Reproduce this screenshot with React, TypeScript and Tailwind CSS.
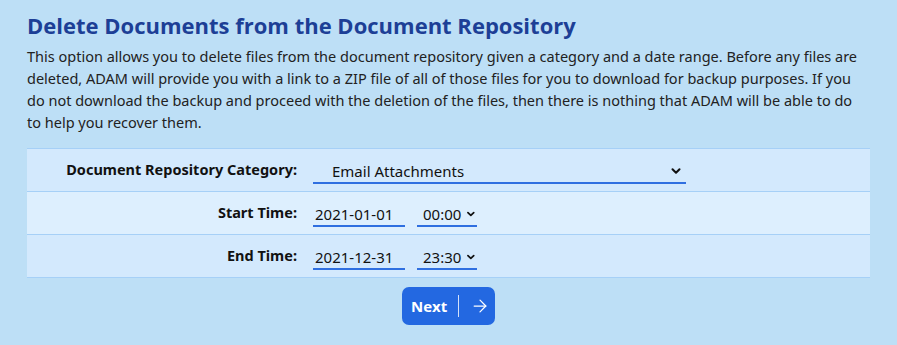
import { ArrowRight, ChevronDown } from 'lucide-react';

const ROW = 'flex items-center border-b border-[#a6d0f7] h-[43px]';
const LABEL = 'w-[270px] shrink-0 text-right font-bold text-[14.5px] text-[#111] mr-4';
const FIELD = 'border-b-2 border-[#2f6fe0] text-[15px] text-[#111] h-[24px] flex items-center';

function Chevron() {
  return <ChevronDown size={14} strokeWidth={3.5} className="text-[#111]" />;
}

export default function App() {
  return (
    <div className="min-h-[345px] w-full bg-[#bddff6] px-[27px] pt-[10px] font-['Noto_Sans','Open_Sans',sans-serif] text-[#1a1a1a]">
      <h1 className="text-[22px] font-bold text-[#1d3f96] leading-[30px] font-['Open_Sans',sans-serif]">
        Delete Documents from the Document Repository
      </h1>
      <p className="mt-[5px] text-[14.5px] leading-[22px] text-[#222] pr-[10px]">
        This option allows you to delete files from the document repository given a category and a date range. Before any files are deleted, ADAM will provide you with a link to a ZIP file of all of those files for you to download for backup purposes. If you do not download the backup and proceed with the deletion of the files, then there is nothing that ADAM will be able to do to help you recover them.
      </p>

      {/* Form table */}
      <div className="mt-[15px] border-t border-[#a6d0f7]">
        <div className={`${ROW} bg-[#d3e9fd]`}>
          <div className={LABEL}>Document Repository Category:</div>
          <div className={`${FIELD} w-[373px] justify-between pl-[19px] pr-[3px] mt-[4px]`}>
            <span>Email Attachments</span>
            <Chevron />
          </div>
        </div>

        <div className={`${ROW} bg-[#ddeffe]`}>
          <div className={LABEL}>Start Time:</div>
          <div className={`${FIELD} w-[92px] pl-[2px] mt-[4px]`}>2021-01-01</div>
          <div className={`${FIELD} w-[60px] ml-[12px] pl-[6px] gap-[4px] mt-[4px]`}>
            <span>00:00</span>
            <Chevron />
          </div>
        </div>

        <div className={`${ROW} bg-[#d3e9fd]`}>
          <div className={LABEL}>End Time:</div>
          <div className={`${FIELD} w-[92px] pl-[2px] mt-[4px]`}>2021-12-31</div>
          <div className={`${FIELD} w-[60px] ml-[12px] pl-[6px] gap-[4px] mt-[4px]`}>
            <span>23:30</span>
            <Chevron />
          </div>
        </div>
      </div>

      <div className="flex justify-center mt-[9px]">
        <button
          type="button"
          className="flex items-center h-[38px] w-[93px] rounded-[7px] bg-[#2368e1] text-white text-[15px] font-bold pl-[9px] font-['Open_Sans',sans-serif]"
        >
          <span>Next</span>
          <span className="mx-[11px] h-[22px] w-px bg-white/80" />
          <ArrowRight size={20} strokeWidth={1.5} />
        </button>
      </div>
    </div>
  );
}
